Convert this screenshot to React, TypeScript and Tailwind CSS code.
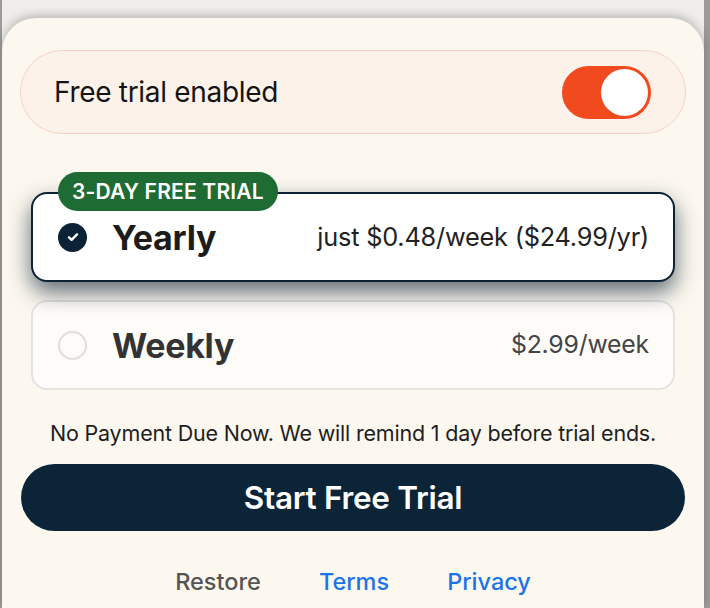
import React from "react";

export default function App() {
  const font = { fontFamily: "Inter, 'Noto Sans', sans-serif" };
  return (
    <div className="w-[710px] h-[608px] overflow-hidden flex bg-[#9c9b99]" style={font}>
      <div className="w-[2px] shrink-0" />
      <div className="w-[702px] shrink-0 flex flex-col bg-gradient-to-b from-[#efeeeb] to-[#d9d7d2]">
        <div className="h-[18px] shrink-0" />
        <div className="flex-1 rounded-t-[34px] bg-[#fcf8ef] shadow-[0_-3px_10px_rgba(0,0,0,0.22)] flex flex-col px-[18px] pt-[32px]">
          {/* toggle row */}
          <div className="h-[84px] rounded-full border border-[#f6d3c4] bg-[#fcf2e9] flex items-center justify-between pl-[33px] pr-[34px]">
            <span className="text-[28px] text-[#141414] tracking-[-0.3px]">Free trial enabled</span>
            <div className="w-[89px] h-[53px] rounded-full bg-[#f04a1e] flex items-center justify-end pr-[3px]">
              <div className="w-[47px] h-[47px] rounded-full bg-white" />
            </div>
          </div>

          {/* yearly card */}
          <div className="relative mt-[58px] mx-[11px] h-[90px] rounded-[16px] border-2 border-[#0c2236] bg-white shadow-[0_10px_22px_rgba(12,34,54,0.65)] flex items-center pl-[25px] pr-[24px]">
            <div className="absolute left-[25px] top-[-22px] h-[39px] px-[14px] rounded-full bg-[#1f6b34] flex items-center">
              <span className="text-white text-[21px] font-semibold tracking-[0.2px]">3-DAY FREE TRIAL</span>
            </div>
            <div className="w-[29px] h-[29px] rounded-full bg-[#0c2236] flex items-center justify-center">
              <svg width="14" height="14" viewBox="0 0 14 14" fill="none">
                <path d="M3 7.3l2.6 2.5L11 4.4" stroke="white" strokeWidth="2.4" strokeLinecap="round" strokeLinejoin="round" />
              </svg>
            </div>
            <span className="ml-[25px] text-[34px] font-bold text-[#1c1c1c] tracking-[-0.3px]">Yearly</span>
            <span className="ml-auto text-[25.3px] text-[#222] tracking-[-0.2px]">just $0.48/week ($24.99/yr)</span>
          </div>

          {/* weekly card */}
          <div className="mt-[18px] mx-[11px] h-[90px] rounded-[16px] border-2 border-[#e4e3e1] bg-[#fefcf9] flex items-center pl-[25px] pr-[24px]">
            <div className="w-[29px] h-[29px] rounded-full border-2 border-[#dededc]" />
            <span className="ml-[25px] text-[34px] font-bold text-[#333] tracking-[-0.3px]">Weekly</span>
            <span className="ml-auto text-[24.8px] text-[#444] tracking-[-0.2px]">$2.99/week</span>
          </div>

          <p className="mt-[27px] text-center text-[21.5px] text-[#1e1e1e] tracking-[-0.2px] whitespace-nowrap">
            No Payment Due Now. We will remind 1 day before trial ends.
          </p>

          <div className="mt-[15px] mx-[1px] h-[67px] rounded-full bg-[#0b2438] flex items-center justify-center">
            <span className="text-white text-[31.5px] font-semibold tracking-[-0.3px]">Start Free Trial</span>
          </div>

          <div className="mt-[33px] flex justify-center gap-[58px] text-[23.5px] font-medium">
            <span className="text-[#555]">Restore</span>
            <span className="text-[#1b74e8]">Terms</span>
            <span className="text-[#1b74e8]">Privacy</span>
          </div>
        </div>
      </div>
      <div className="w-[6px] shrink-0" />
    </div>
  );
}
